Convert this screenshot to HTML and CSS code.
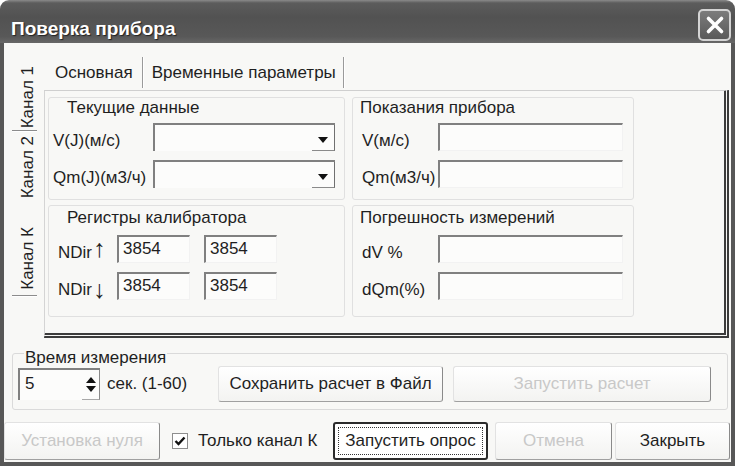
FILE: index.html
```html
<!DOCTYPE html>
<html lang="ru">
<head>
<meta charset="utf-8">
<title>Поверка прибора</title>
<link rel="stylesheet" href="styles.css">
</head>
<body>
<div class="window">
  <div class="titlebar">
    <span class="title">Поверка прибора</span>
    <span class="close"><svg width="20" height="20" viewBox="0 0 20 20"><path d="M3.5 3.5 L16.5 16.5 M16.5 3.5 L3.5 16.5" stroke="#fff" stroke-width="3.6" stroke-linecap="round"/></svg></span>
  </div>
  <div class="client">
    <div class="vtabs">
      <div class="vstrip">
        <div class="vtab t1"><span>Канал 1</span></div>
        <div class="vsep"></div>
        <div class="vtab t2"><span>Канал 2</span></div>
        <div class="vtab t3"><span>Канал К</span></div>
        <div class="vsep"></div>
      </div>
      <div class="panel">
        <div class="htabs">
          <div class="htab h1">Основная</div>
          <div class="htab h2">Временные параметры</div>
        </div>
        <div class="page">
          <div class="groups">
            <div class="group g-top g-left">
              <div class="legend">Текущие данные</div>
              <div class="rows">
                <div class="row"><span class="lab">V(J)(м/с)</span><span class="field combo"><span class="arrow"><i class="tri-down"></i></span></span></div>
                <div class="row"><span class="lab">Qm(J)(м3/ч)</span><span class="field combo"><span class="arrow"><i class="tri-down"></i></span></span></div>
              </div>
            </div>
            <div class="group g-top g-right">
              <div class="legend">Показания прибора</div>
              <div class="rows">
                <div class="row"><span class="lab">V(м/с)</span><span class="field wide"></span></div>
                <div class="row"><span class="lab">Qm(м3/ч)</span><span class="field wide"></span></div>
              </div>
            </div>
            <div class="group g-bot g-left g-reg">
              <div class="legend">Регистры калибратора</div>
              <div class="rows">
                <div class="row"><span class="lab">NDir<span class="arr">↑</span></span><span class="field num">3854</span><span class="field num">3854</span></div>
                <div class="row"><span class="lab">NDir<span class="arr dn">↓</span></span><span class="field num">3854</span><span class="field num">3854</span></div>
              </div>
            </div>
            <div class="group g-bot g-right">
              <div class="legend">Погрешность измерений</div>
              <div class="rows">
                <div class="row"><span class="lab">dV %</span><span class="field wide"></span></div>
                <div class="row"><span class="lab">dQm(%)</span><span class="field wide"></span></div>
              </div>
            </div>
          </div>
        </div>
      </div>
    </div>

    <div class="timebox">
      <div class="legend">Время измерения</div>
      <div class="trow">
        <span class="spin"><span class="spinval">5</span><span class="spinbtn"><i class="tri-up"></i><i class="tri-down"></i></span></span>
        <span class="sec">сек. (1-60)</span>
        <span class="btn b-save">Сохранить расчет в Файл</span>
        <span class="btn b-calc disabled">Запустить расчет</span>
      </div>
    </div>

    <div class="bottom">
      <span class="btn b-zero disabled">Установка нуля</span>
      <span class="check"><svg width="14" height="14" viewBox="0 0 14 14"><path d="M2.5 7 L5.5 10 L11.5 3.5" fill="none" stroke="#111" stroke-width="2.4"/></svg></span>
      <span class="checklab">Только канал К</span>
      <span class="btn b-poll"><span class="focus">Запустить опрос</span></span>
      <span class="btn b-cancel disabled">Отмена</span>
      <span class="btn b-close">Закрыть</span>
    </div>
  </div>
</div>
</body>
</html>
```
FILE: styles.css
```css
* { box-sizing: border-box; }
html, body { margin: 0; padding: 0; background: #fff; }
body {
  font-family: "Liberation Sans", Arial, sans-serif;
  font-size: 17px;
  color: #1f1f1f;
}
i { display: block; }

.window { width: 735px; height: 466px; display: flex; flex-direction: column; }

.titlebar {
  height: 43px; flex: none;
  display: flex; align-items: flex-end; justify-content: space-between;
  padding: 0 4px 2px 11px;
  border-radius: 9px 9px 0 0;
  background: linear-gradient(#8a8a8a 0, #5c5c5c 3px, #525252 40%, #585858 85%, #686868 100%);
}
.title {
  color: #fff; font-weight: bold; font-size: 19px; line-height: 22px;
  margin-bottom: 1px; text-shadow: 1px 1px 1px #222;
}
.close {
  width: 33px; height: 32px;
  border: 2px solid #d4d4d4; border-radius: 5px;
  background: linear-gradient(#7c7c7c, #5a5a5a);
  display: flex; align-items: center; justify-content: center;
}

.client {
  flex: 1; display: flex; flex-direction: column;
  background: #f8f8f6;
  border: 4px solid #575757; border-top: 0;
}

/* vertical tabs */
.vtabs { margin-top: 5px; height: 290px; display: flex; flex: none; }
.vstrip { width: 36px; flex: none; display: flex; flex-direction: column; }
.vtab {
  display: flex; flex-direction: column; justify-content: flex-end; align-items: center;
  padding-left: 12px; flex: none;
}
.vtab span { writing-mode: vertical-rl; transform: rotate(180deg); line-height: 20px; white-space: nowrap; }
.t1 { height: 82px; padding-bottom: 2px; }
.t2 { height: 79px; padding-bottom: 12px; }
.t3 { height: 85px; padding-bottom: 5px; }
.vsep { height: 1px; margin: 0 3px 0 8px; background: #8c8c8c; box-shadow: 0 1px 0 #fff; flex: none; }

.panel { flex: 1; display: flex; flex-direction: column; margin-right: 2px; }
.htabs { height: 42px; padding-top: 9px; display: flex; align-items: flex-start; flex: none; }
.htab { height: 31px; line-height: 31px; white-space: nowrap; border-right: 1px solid #9a9a9a; box-shadow: 1px 0 0 #fff; }
.h1 { padding: 0 9px 0 15px; }
.h2 { padding: 0 7px 0 9px; }

.page {
  flex: 1; margin-left: 4px;
  border-top: 1px solid #cfcfcf; border-left: 1px solid #d4d4d4;
  border-right: 5px double #3c3c3c; border-bottom: 5px double #3c3c3c;
  padding: 6px 0 0 3px;
}
.groups {
  display: grid;
  grid-template-columns: 297px 282px;
  grid-template-rows: 103px 112px;
  gap: 5px 7px;
}
.group { border: 1px solid #e0e0e0; border-radius: 3px; display: flex; flex-direction: column; padding-top: 1px; }
.g-bot { padding-top: 3px; }
.legend { height: 18px; line-height: 18px; white-space: nowrap; }
.g-left .legend { margin-left: 18px; }
.g-right .legend { margin-left: 7px; }
.g-top .legend { margin-bottom: 6px; }
.g-bot .legend { margin-bottom: 8px; }
.rows { display: flex; flex-direction: column; gap: 9px; }
.g-left .rows { padding-left: 4px; }
.g-reg .rows { padding-left: 9px; }
.g-right .rows { padding-left: 9px; }
.row { display: flex; align-items: flex-end; height: 28px; }
.lab { flex: none; line-height: 20px; white-space: nowrap; }
.g-left .lab { width: 100px; }
.g-reg .lab { width: 59px; }
.g-right .lab { width: 76px; }
.arr { font-size: 25px; line-height: 20px; display: inline-block; margin-left: 1px; vertical-align: 1px; }
.arr.dn { vertical-align: -3px; }

.field {
  height: 28px; flex: none;
  border-top: 2px solid #808080; border-left: 2px solid #808080;
  border-right: 1px solid #f2f2f2; border-bottom: 1px solid #f2f2f2;
  background: #fcfcfb;
  padding: 2px 4px; line-height: 20px;
}
.combo { width: 182px; display: flex; justify-content: flex-end; padding: 0; border-right: 0; border-bottom: 0; }
.arrow {
  width: 23px; height: 100%;
  border-right: 1px solid #707070; border-bottom: 1px solid #8a8a8a;
  display: flex; align-items: center; justify-content: center;
}
.tri-down { width: 0; height: 0; border-left: 5px solid transparent; border-right: 5px solid transparent; border-top: 6px solid #111; }
.tri-up { width: 0; height: 0; border-left: 5px solid transparent; border-right: 5px solid transparent; border-bottom: 6px solid #111; }
.arrow .tri-down { margin-top: 4px; }
.wide { width: 185px; }
.num { width: 73px; }
.num + .num { margin-left: 14px; }

/* time group */
.timebox {
  margin: 15px 3px 0 8px; flex: none;
  border: 1px solid #dadada; border-radius: 3px;
  padding: 0 8px 7px 5px;
  display: flex; flex-direction: column;
}
.timebox .legend {
  margin: -5px 0 0 6px; padding: 0 1px; align-self: flex-start;
  background: #f8f8f6;
}
.trow { display: flex; align-items: center; height: 36px; margin-top: -1px; }
.spin {
  width: 82px; height: 32px; flex: none;
  border-top: 2px solid #808080; border-left: 2px solid #808080;
  background: #fcfcfb;
  display: flex; justify-content: space-between; align-items: stretch;
}
.spinval { padding-left: 5px; line-height: 28px; }
.spinbtn {
  width: 18px; display: flex; flex-direction: column; align-items: center; justify-content: center; gap: 3px;
  border-right: 1px solid #8a8a8a; border-bottom: 1px solid #a8a8a8;
}
.sec { width: 118px; flex: none; padding-left: 7px; white-space: nowrap; }

.btn {
  flex: none; display: flex; align-items: center; justify-content: center;
  white-space: nowrap;
  background: linear-gradient(#ffffff, #f3f3f1);
  border: 1px solid #e2e2e2; border-right-color: #8a8a8a; border-bottom-color: #a0a0a0;
  border-radius: 3px;
}
.disabled { color: #c8c8c8; }
.b-save { width: 225px; height: 36px; }
.b-calc { width: 258px; height: 36px; margin-left: 10px; }

/* bottom row */
.bottom { display: flex; align-items: center; height: 38px; margin-top: 12px; flex: none; }
.bottom .btn { height: 38px; }
.b-zero { width: 156px; }
.check {
  width: 16px; height: 16px; margin-left: 12px; flex: none;
  border: 1px solid #8e8e8e; background: #fff;
  display: flex; align-items: center; justify-content: center;
}
.checklab { width: 125px; margin-left: 10px; white-space: nowrap; flex: none; }
.b-poll { width: 155px; margin-left: 10px; border: 2px solid #2a2a2a; border-radius: 3px; padding: 3px; background: #fff; }
.focus { display: flex; align-items: center; justify-content: center; width: 100%; height: 100%; border: 1px dotted #333; }
.b-cancel { width: 117px; margin-left: 7px; }
.b-close { width: 115px; margin-left: 3px; }
```
